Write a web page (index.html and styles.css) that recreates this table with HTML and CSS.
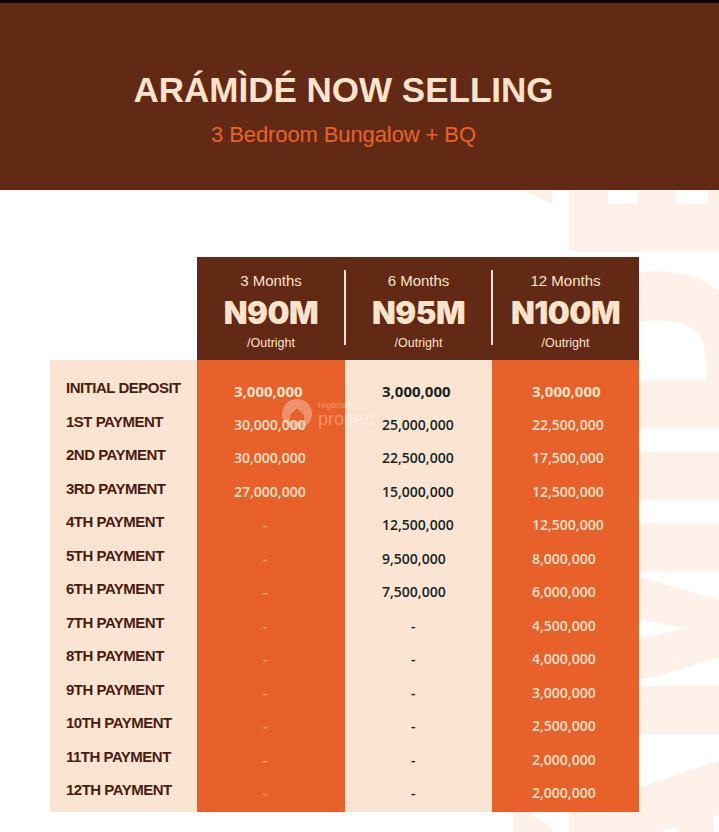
FILE: index.html
```html
<!DOCTYPE html>
<html lang="en">
<head>
<meta charset="utf-8">
<title>Arámìdé Now Selling</title>
<link rel="stylesheet" href="styles.css">
</head>
<body>
<div class="topbar"></div>
<header class="hero">
  <h1 class="hero-title">ARÁMÌDÉ NOW SELLING</h1>
  <p class="hero-sub">3 Bedroom Bungalow + BQ</p>
</header>
<main class="content">
  <div class="bg-mark" aria-hidden="true">ARÁMÌDÉ</div>
  <section class="plan">
    <div class="head-spacer"></div>
    <div class="option"><span class="opt-term">3 Months</span><span class="opt-price">N90M</span><span class="opt-note">/Outright</span></div>
    <div class="option"><span class="opt-term">6 Months</span><span class="opt-price">N95M</span><span class="opt-note">/Outright</span></div>
    <div class="option"><span class="opt-term">12 Months</span><span class="opt-price">N100M</span><span class="opt-note">/Outright</span></div>

    <div class="col col-labels">
      <div class="cell label">INITIAL DEPOSIT</div>
      <div class="cell label">1ST PAYMENT</div>
      <div class="cell label">2ND PAYMENT</div>
      <div class="cell label">3RD PAYMENT</div>
      <div class="cell label">4TH PAYMENT</div>
      <div class="cell label">5TH PAYMENT</div>
      <div class="cell label">6TH PAYMENT</div>
      <div class="cell label">7TH PAYMENT</div>
      <div class="cell label">8TH PAYMENT</div>
      <div class="cell label">9TH PAYMENT</div>
      <div class="cell label">10TH PAYMENT</div>
      <div class="cell label">11TH PAYMENT</div>
      <div class="cell label">12TH PAYMENT</div>
    </div>
    <div class="col col-values col-orange">
      <div class="cell value lead">3,000,000</div>
      <div class="cell value">30,000,000</div>
      <div class="cell value">30,000,000</div>
      <div class="cell value">27,000,000</div>
      <div class="cell value dash">-</div>
      <div class="cell value dash">-</div>
      <div class="cell value dash">-</div>
      <div class="cell value dash">-</div>
      <div class="cell value dash">-</div>
      <div class="cell value dash">-</div>
      <div class="cell value dash">-</div>
      <div class="cell value dash">-</div>
      <div class="cell value dash">-</div>
    </div>
    <div class="col col-values col-peach">
      <div class="cell value lead">3,000,000</div>
      <div class="cell value">25,000,000</div>
      <div class="cell value">22,500,000</div>
      <div class="cell value">15,000,000</div>
      <div class="cell value">12,500,000</div>
      <div class="cell value">9,500,000</div>
      <div class="cell value">7,500,000</div>
      <div class="cell value dash">-</div>
      <div class="cell value dash">-</div>
      <div class="cell value dash">-</div>
      <div class="cell value dash">-</div>
      <div class="cell value dash">-</div>
      <div class="cell value dash">-</div>
    </div>
    <div class="col col-values col-orange col-last">
      <div class="cell value lead">3,000,000</div>
      <div class="cell value">22,500,000</div>
      <div class="cell value">17,500,000</div>
      <div class="cell value">12,500,000</div>
      <div class="cell value">12,500,000</div>
      <div class="cell value">8,000,000</div>
      <div class="cell value">6,000,000</div>
      <div class="cell value">4,500,000</div>
      <div class="cell value">4,000,000</div>
      <div class="cell value">3,000,000</div>
      <div class="cell value">2,500,000</div>
      <div class="cell value">2,000,000</div>
      <div class="cell value">2,000,000</div>
    </div>

    <div class="npc-mark" aria-hidden="true">
      <svg class="npc-logo" width="30" height="30" viewBox="0 0 30 30">
        <circle cx="15" cy="15" r="15" fill="#ffffff"/>
        <path d="M8 16 L15 9.5 L22 16 L22 22 L8 22 Z" fill="#e8612a"/>
      </svg>
      <div class="npc-text">
        <span class="npc-small">Nigeria</span>
        <span class="npc-big">propert</span>
      </div>
    </div>
  </section>
</main>
</body>
</html>
```
FILE: styles.css
```css
html, body {
  margin: 0;
  padding: 0;
}

body {
  width: 719px;
  height: 832px;
  overflow: hidden;
  background: #ffffff;
  font-family: "Liberation Sans", Arial, sans-serif;
}

.topbar {
  height: 3px;
  background: #0b0706;
}

.hero {
  position: relative;
  z-index: 2;
  height: 187px;
  box-sizing: border-box;
  padding: 67px 32px 0 0;
  background: #622914;
  display: flex;
  flex-direction: column;
  align-items: center;
}

.hero-title {
  margin: 0;
  font-family: "Liberation Sans", Arial, sans-serif;
  font-weight: 700;
  font-size: 35px;
  line-height: 40px;
  color: #fde3cb;
}

.hero-sub {
  margin: 12px 0 0;
  font-family: "Liberation Sans", Arial, sans-serif;
  font-weight: 400;
  font-size: 22px;
  line-height: 26px;
  letter-spacing: -0.1px;
  color: #e8632b;
}

.content {
  position: relative;
  height: 642px;
  box-sizing: border-box;
  padding: 67px 0 0 50px;
  overflow: hidden;
}

.bg-mark {
  position: absolute;
  top: -77px;
  right: -62px;
  writing-mode: vertical-rl;
  transform: rotate(180deg);
  font-family: Inter, "Liberation Sans", sans-serif;
  font-weight: 900;
  font-size: 245px;
  line-height: 1;
  color: #fef1e9;
  white-space: nowrap;
  z-index: 0;
}

.plan {
  position: relative;
  z-index: 1;
  display: grid;
  grid-template-columns: 147px 148px 147px 147px;
  width: 589px;
}

.option {
  position: relative;
  height: 103px;
  background: #622914;
  color: #fde3cb;
  display: flex;
  flex-direction: column;
  align-items: center;
}

.option + .option::before {
  content: "";
  position: absolute;
  left: -1px;
  top: 13px;
  bottom: 15px;
  width: 2px;
  background: #f4e2d6;
}

.opt-term {
  margin-top: 15px;
  font-size: 15px;
  line-height: 18px;
}

.opt-price {
  margin-top: 5px;
  font-family: Inter, "Liberation Sans", sans-serif;
  font-weight: 900;
  font-size: 31px;
  line-height: 36px;
  letter-spacing: -0.5px;
}

.opt-note {
  margin-top: 5px;
  font-size: 12.5px;
  line-height: 14px;
}

.col {
  display: flex;
  flex-direction: column;
  padding: 11px 0 5px;
}

.cell {
  height: 33.5px;
  display: flex;
  align-items: center;
  box-sizing: border-box;
}

.col-labels {
  background: #fce4d3;
}

.label {
  padding-left: 16px;
  font-family: "Liberation Sans", Arial, sans-serif;
  font-weight: 700;
  font-size: 15px;
  letter-spacing: -0.5px;
  color: #4a1c0f;
}

.col-orange {
  background: #e8612a;
  color: #fde3cb;
}

.col-peach {
  background: #fce4d3;
  color: #17251d;
}

.value {
  padding-left: 37px;
  padding-top: 6px;
  font-family: "Open Sans", "Liberation Sans", sans-serif;
  font-weight: 600;
  font-size: 14px;
}

.col-last .value {
  padding-left: 40px;
}

.value.lead {
  font-weight: 700;
  font-size: 15px;
}

.value.dash {
  padding-left: 66px;
}

.col-orange .value.dash {
  color: rgba(253, 227, 203, 0.6);
}

.npc-mark {
  position: absolute;
  left: 232px;
  top: 142px;
  z-index: 2;
  display: flex;
  align-items: center;
  gap: 6px;
  opacity: 0.3;
  pointer-events: none;
}

.npc-logo {
  display: block;
}

.npc-text {
  display: flex;
  flex-direction: column;
  color: #ffffff;
  font-family: "Liberation Sans", Arial, sans-serif;
}

.npc-small {
  font-size: 9px;
  line-height: 10px;
}

.npc-big {
  font-size: 18px;
  line-height: 18px;
}
```
